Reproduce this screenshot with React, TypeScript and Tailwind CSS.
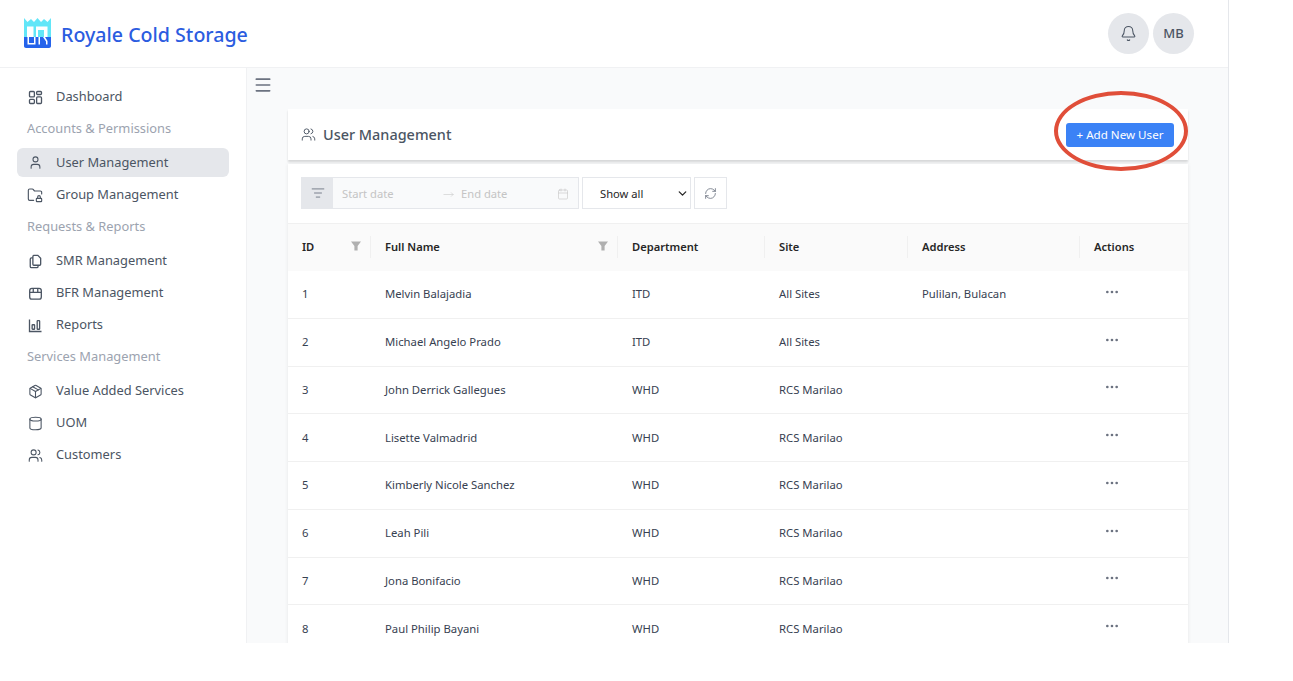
import React from "react";
import {
  Bell,
  Calendar,
  ChevronDown,
  Cylinder,
  Ellipsis,
  FolderLock,
  ListFilter,
  Menu,
  MoveRight,
  Package,
  RefreshCw,
  User,
  Users,
} from "lucide-react";

type IconProps = { className?: string; strokeWidth?: number };

const DashboardIcon: React.FC<IconProps> = ({ className }) => (
  <svg viewBox="0 0 16 16" fill="none" stroke="currentColor" strokeWidth={1.4} className={className}>
    <rect x="1.6" y="1.6" width="5.2" height="5.8" rx="1" />
    <rect x="9.2" y="1.6" width="5.2" height="3.2" rx="1" />
    <rect x="1.6" y="10" width="5.2" height="4.4" rx="1" />
    <rect x="9.2" y="7.4" width="5.2" height="7" rx="1" />
  </svg>
);

const PagesIcon: React.FC<IconProps> = ({ className }) => (
  <svg viewBox="0 0 16 16" fill="none" stroke="currentColor" strokeWidth={1.4} className={className}>
    <path d="M5.2 2.600c0-.6.5-1.100 1.100-1.100h4.200l3 3v6.400c0 .6-.5 1.100-1.100 1.100H6.300c-.6 0-1.100-.5-1.100-1.100z" />
    <path d="M5.200 4.200H3.700c-.8 0-1.300.5-1.300 1.300v7.700c0 .8.5 1.300 1.300 1.300h5.700c.8 0 1.300-.5 1.300-1.300V12" />
  </svg>
);

const BoxIcon: React.FC<IconProps> = ({ className }) => (
  <svg viewBox="0 0 16 16" fill="none" stroke="currentColor" strokeWidth={1.4} className={className}>
    <rect x="1.800" y="2.600" width="12.400" height="11.400" rx="2.400" />
    <path d="M1.800 6.800h12.400M5.600 2.600v4.200M10.400 2.600v4.200" />
  </svg>
);

const ReportIcon: React.FC<IconProps> = ({ className }) => (
  <svg viewBox="0 0 16 16" fill="none" stroke="currentColor" strokeWidth={1.4} className={className}>
    <path d="M1.600 1.600v12.800h12.800" />
    <rect x="4.400" y="7.200" width="2.600" height="4.800" rx=".6" />
    <rect x="9.800" y="2.800" width="2.600" height="9.200" rx=".6" />
  </svg>
);

const SortFilter: React.FC = () => (
  <svg viewBox="0 0 10 10" className="h-[10px] w-[10px] text-[#b0b0b0]" fill="currentColor">
    <path d="M0 .5h10L6.600 5v4.500H3.400V5z" />
  </svg>
);

const Logo: React.FC = () => (
  <svg viewBox="0 0 27 30" className="h-[30px] w-[27px]">
    <path d="M0 0l3.500 4L7 1l3 3 3.500-4L17 4l3-3 3.500 3L27 0v19H0z" fill="#62e6f8" />
    <path d="M0 19h27v9c0 1-.8 2-2 2H2c-1.200 0-2-1-2-2z" fill="#2563eb" />
    <path d="M3 8.500h20.500V19H20v-7h-6v7h-2V8.500H9.500V19H3z" fill="#fff" />
    <path d="M3.500 19H5v6h5v-6h1.500v7.500H3.500zM14.500 19H16v7.500h-1.500zM19 19h2l2.500 4v3.500H22V23.500z" fill="#fff" />
  </svg>
);

const NavItem: React.FC<{ icon: React.ReactNode; label: string; active?: boolean }> = ({ icon, label, active }) => (
  <div
    className={`flex items-center gap-[13px] rounded-md pl-[10px] text-[12.85px] text-[#4b5563] ${
      active ? "mb-[3px] h-[29px] bg-[#e5e7eb]" : "mb-[2px] h-[30px]"
    }`}
  >
    <span className="flex w-[16px] justify-center text-[#4b5563]">{icon}</span>
    <span className={active ? "pt-[1px]" : ""}>{label}</span>
  </div>
);

const NavLabel: React.FC<{ label: string }> = ({ label }) => (
  <div className="mb-[4px] flex h-[30px] items-center pl-[10px] text-[12.85px] text-[#9ca3af]">{label}</div>
);

const users = [
  { id: 1, name: "Melvin Balajadia", dept: "ITD", site: "All Sites", address: "Pulilan, Bulacan" },
  { id: 2, name: "Michael Angelo Prado", dept: "ITD", site: "All Sites", address: "" },
  { id: 3, name: "John Derrick Gallegues", dept: "WHD", site: "RCS Marilao", address: "" },
  { id: 4, name: "Lisette Valmadrid", dept: "WHD", site: "RCS Marilao", address: "" },
  { id: 5, name: "Kimberly Nicole Sanchez", dept: "WHD", site: "RCS Marilao", address: "" },
  { id: 6, name: "Leah Pili", dept: "WHD", site: "RCS Marilao", address: "" },
  { id: 7, name: "Jona Bonifacio", dept: "WHD", site: "RCS Marilao", address: "" },
  { id: 8, name: "Paul Philip Bayani", dept: "WHD", site: "RCS Marilao", address: "" },
];

const HeadCell: React.FC<{ label: string; filter?: boolean; last?: boolean }> = ({ label, filter, last }) => (
  <th className="relative px-[14px] text-left text-[11.15px] font-semibold text-[#262626]">
    <div className="flex items-center justify-between">
      <span>{label}</span>
      {filter && <span className="mr-[-4px] mt-[-3px]"><SortFilter /></span>}
    </div>
    {!last && <span className="absolute right-0 top-1/2 h-[22px] w-px -translate-y-1/2 bg-[#f0f0f0]" />}
  </th>
);

export default function App() {
  return (
    <div className="h-[681px] w-[1293px] overflow-hidden bg-white font-['Noto_Sans',sans-serif]">
      <div className="relative flex h-[643px] w-[1229px] flex-col overflow-hidden border-r border-[#e5e7eb]">
        <header className="flex h-[68px] shrink-0 items-center justify-between border-b border-[#f0f1f3] pl-[24px] pr-[34px]">
          <div className="flex items-center gap-[10px]">
            <Logo />
            <span className="pt-[2px] text-[19.6px] font-medium text-[#2b5ce0]">Royale Cold Storage</span>
          </div>
          <div className="flex items-center gap-[4px]">
            <div className="flex h-[41px] w-[41px] items-center justify-center rounded-full bg-[#e5e7eb]">
              <Bell className="h-[17px] w-[17px] text-[#4b5563]" strokeWidth={1.5} />
            </div>
            <div className="flex h-[41px] w-[41px] items-center justify-center rounded-full bg-[#e5e7eb] text-[13px] font-medium text-[#4b5563]">
              MB
            </div>
          </div>
        </header>

        <div className="flex min-h-0 flex-1">
          <aside className="w-[247px] shrink-0 border-r border-[#f0f1f3] bg-white pl-[17px] pr-[17px] pt-[14px]">
            <NavItem icon={<DashboardIcon className="h-[15px] w-[15px]" />} label="Dashboard" />
            <NavLabel label="Accounts & Permissions" />
            <NavItem icon={<User className="h-[15px] w-[15px]" strokeWidth={1.7} />} label="User Management" active />
            <NavItem icon={<FolderLock className="h-[16px] w-[16px]" strokeWidth={1.7} />} label="Group Management" />
            <NavLabel label="Requests & Reports" />
            <NavItem icon={<PagesIcon className="h-[15px] w-[15px]" />} label="SMR Management" />
            <NavItem icon={<BoxIcon className="h-[15px] w-[15px]" />} label="BFR Management" />
            <NavItem icon={<ReportIcon className="h-[15px] w-[15px]" />} label="Reports" />
            <NavLabel label="Services Management" />
            <NavItem icon={<Package className="h-[15px] w-[15px]" strokeWidth={1.7} />} label="Value Added Services" />
            <NavItem icon={<Cylinder className="h-[15px] w-[15px]" strokeWidth={1.7} />} label="UOM" />
            <NavItem icon={<Users className="h-[15px] w-[15px]" strokeWidth={1.7} />} label="Customers" />
          </aside>

          <main className="min-w-0 flex-1 bg-[#f9fafb] pl-[41px] pr-[40px]">
            <div className="ml-[-35px] flex h-[41px] items-start pt-[7px]">
              <Menu className="h-[20px] w-[20px] text-[#6b7280]" strokeWidth={2} />
            </div>

            <div className="flex h-[51px] items-center justify-between bg-white pl-[13px] pr-[14px] shadow-[0_2px_2px_rgba(0,0,0,0.14)]">
              <div className="flex items-center gap-[7px] text-[#4b5563]">
                <Users className="h-[15px] w-[15px]" strokeWidth={1.5} />
                <span className="text-[14.45px] font-medium">User Management</span>
              </div>
              <button className="flex h-[24px] w-[108px] items-center justify-center rounded-[3px] bg-[#3b82f6] text-[11.6px] text-white">
                + Add New User
              </button>
            </div>

            <div className="mt-[4px] bg-white shadow-[0_0_4px_rgba(0,0,0,0.08)]">
              <div className="flex h-[59px] items-start gap-[3px] pl-[13px] pt-[13px]">
                <div className="flex h-[32px] w-[278px] border border-[#e5e7eb] bg-[#f9fafb]">
                  <div className="flex w-[31px] items-center justify-center bg-[#e5e7eb]">
                    <ListFilter className="h-[14px] w-[14px] text-[#6b7280]" strokeWidth={1.5} />
                  </div>
                  <div className="flex flex-1 items-center pl-[9px] pr-[9px] pt-[2px] text-[11.2px] text-[#c4c4c4]">
                    <span className="w-[100px]">Start date</span>
                    <MoveRight className="h-[11px] w-[13px] text-[#c4c4c4]" strokeWidth={1.2} />
                    <span className="ml-[6px]">End date</span>
                    <Calendar className="ml-auto h-[12px] w-[12px]" strokeWidth={1.2} />
                  </div>
                </div>
                <div className="flex h-[32px] w-[109px] items-center justify-between border border-[#e5e7eb] pl-[17px] pr-[1px] pt-[2px] text-[11.2px] text-[#262626]">
                  <span>Show all</span>
                  <ChevronDown className="mb-[2px] h-[13px] w-[13px] text-[#262626]" strokeWidth={2.4} />
                </div>
                <div className="flex h-[32px] w-[33px] items-center justify-center border border-[#e5e7eb]">
                  <RefreshCw className="h-[13px] w-[13px] text-[#6b7280]" strokeWidth={1.5} />
                </div>
              </div>

              <table className="w-full table-fixed border-collapse">
                <colgroup>
                  <col className="w-[83px]" />
                  <col className="w-[247px]" />
                  <col className="w-[147px]" />
                  <col className="w-[143px]" />
                  <col className="w-[172px]" />
                  <col />
                </colgroup>
                <thead>
                  <tr className="h-[47px] border-t border-[#f0f0f0] bg-[#fafafa]">
                    <HeadCell label="ID" filter />
                    <HeadCell label="Full Name" filter />
                    <HeadCell label="Department" />
                    <HeadCell label="Site" />
                    <HeadCell label="Address" />
                    <HeadCell label="Actions" last />
                  </tr>
                </thead>
                <tbody className="text-[11.3px] text-[#374151]">
                  {users.map((u) => (
                    <tr key={u.id} className="h-[47.75px] border-b border-[#f0f0f0]">
                      <td className="px-[14px] pt-[1px]">{u.id}</td>
                      <td className="px-[14px] pt-[1px]">{u.name}</td>
                      <td className="px-[14px] pt-[1px]">{u.dept}</td>
                      <td className="px-[14px] pt-[1px]">{u.site}</td>
                      <td className="px-[14px] pt-[1px]">{u.address}</td>
                      <td className="px-[14px] pt-[1px]">
                        <span className="ml-[10px] block w-[16px] pb-[6px]">
                          <Ellipsis className="h-[16px] w-[16px] text-[#6b7280]" strokeWidth={2} />
                        </span>
                      </td>
                    </tr>
                  ))}
                </tbody>
              </table>
            </div>
          </main>
        </div>

        {/* red annotation round the button */}
        <div className="pointer-events-none absolute left-[1054px] top-[91px] h-[80px] w-[134px] rounded-[50%] border-[4px] border-[#e04e39]" />
      </div>
    </div>
  );
}
